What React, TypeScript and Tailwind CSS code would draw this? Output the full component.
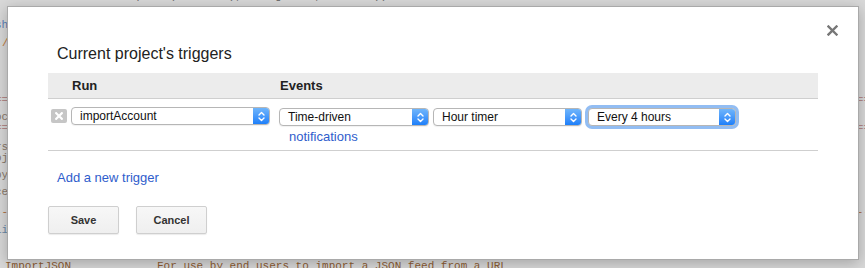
import React from 'react';

const Stepper = () => (
  <div className="flex w-[16px] shrink-0 items-center justify-center rounded-r-[3px] bg-linear-to-b from-[#6fb5fb] to-[#1c7ff9]">
    <svg width="7" height="11" viewBox="0 0 7 11" fill="none" stroke="white" strokeWidth="1.4" strokeLinecap="round" strokeLinejoin="round">
      <path d="M1 4 L3.5 1.5 L6 4" />
      <path d="M1 7 L3.5 9.5 L6 7" />
    </svg>
  </div>
);

const Select = ({ value, className }: { value: string; className: string }) => (
  <div className={`flex h-[18px] items-stretch rounded-[4px] border border-[#b6b6b6] bg-white shadow-[0_1px_1px_rgba(0,0,0,0.06)] ${className}`}>
    <div className="flex flex-1 items-center pl-[8px] text-[12px] leading-none text-[#111]">{value}</div>
    <Stepper />
  </div>
);

const Button = ({ label }: { label: string }) => (
  <button className="h-[28px] w-[71px] rounded-[2px] border border-[#cfcfcf] bg-linear-to-b from-[#f7f7f7] to-[#efefef] text-[11px] font-bold text-[#333] shadow-[0_1px_1px_rgba(0,0,0,0.08)]">
    {label}
  </button>
);

// the dimmed script editor behind the dialog; only its edges show
const Rule = ({ char, className }: { char: string; className: string }) => (
  <div className={`flex justify-between ${className}`}>
    <span className="ml-[-5px]">{char}</span>
    <span className="mr-[-5px]">{char}</span>
  </div>
);

const Backdrop = () => (
  <div className="flex flex-col font-['Liberation_Mono','DejaVu_Sans_Mono',monospace] text-[11px] leading-[12px] whitespace-pre">
    <div className="mt-[-10px] ml-[110px] text-[#666]">{'    p    (        ),     g     ,        ))'}</div>
    <div className="mt-[17px] ml-[-5px] text-[#5a7fb8]">sh</div>
    <div className="mt-[6px] ml-[2px] text-[#c07a3a]">/</div>
    <Rule char="==" className="mt-[45px] text-[#b48a8a]" />
    <div className="mt-[5px] ml-[-5px] text-[#8a7a6a]">oc</div>
    <Rule char="==" className="mt-[-1px] text-[#b48a8a]" />
    <div className="mt-[7px] ml-[-5px] text-[#8a7a6a]">rs</div>
    <div className="mt-[-1px] ml-[-5px] text-[#8a7a6a]">oj</div>
    <div className="mt-[5px] ml-[-5px] text-[#8a7a6a]">py</div>
    <div className="mt-[5px] ml-[-5px] text-[#8a7a6a]">ce</div>
    <Rule char="--" className="mt-[8px] text-[#b07040]" />
    <div className="mt-[6px] ml-[-5px] text-[#6a8aa8]">li</div>
    <div className="mt-[24px] flex text-[#8f5d33]">
      <span className="ml-[5px] w-[152px]">ImportJSON</span>
      <span>For use by end users to import a JSON feed from a URL</span>
    </div>
  </div>
);

const App = () => {
  return (
    <div className="relative h-[268px] w-[865px] overflow-hidden bg-[#d9d9d9] font-['Liberation_Sans',Arial,sans-serif]">
      <Backdrop />
      <div className="absolute left-[7px] top-[6px] h-[254px] w-[852px] border border-[#a9a9a9] bg-white pl-[40px] pt-[36px] shadow-[0_3px_14px_rgba(0,0,0,0.25)]">
        <button className="absolute right-[20px] top-[18px] text-[#777]">
          <svg width="11" height="11" viewBox="0 0 11 11" stroke="currentColor" strokeWidth="2.4" strokeLinecap="square">
            <path d="M1.5 1.5 L9.5 9.5 M9.5 1.5 L1.5 9.5" />
          </svg>
        </button>

        <div className="pl-[9px] text-[16px] leading-[22px] text-[#222]">Current project's triggers</div>

        <div className="mt-[8px] flex h-[26px] w-[770px] items-center border-b border-[#cfcfcf] bg-[#ececec] text-[13px] font-bold text-[#222]">
          <div className="w-[232px] pl-[24px]">Run</div>
          <div>Events</div>
        </div>

        <div className="flex h-[52px] w-[770px] border-b border-[#cfcfcf] pt-[8px]">
          <div className="ml-[3px] mt-[2px] flex h-[14px] w-[16px] items-center justify-center rounded-[2px] bg-[#c6c6c6]">
            <svg width="8" height="8" viewBox="0 0 8 8" stroke="white" strokeWidth="2.2" strokeLinecap="square">
              <path d="M1.2 1.2 L6.8 6.8 M6.8 1.2 L1.2 6.8" />
            </svg>
          </div>
          <Select value="importAccount" className="ml-[4px] w-[199px]" />
          <div className="ml-[9px] flex flex-col">
            <div className="mt-[1px] flex">
              <Select value="Time-driven" className="w-[150px]" />
              <Select value="Hour timer" className="ml-[4px] w-[149px]" />
              <Select value="Every 4 hours" className="ml-[6px] w-[148px] ring-[3px] ring-[#92bdf3]" />
            </div>
            <div className="mt-[3px] pl-[10px] text-[13px] leading-[16px] text-[#2f5dcc]">notifications</div>
          </div>
        </div>

        <div className="mt-[19px] pl-[9px] text-[13px] leading-[16px] text-[#2f5dcc]">Add a new trigger</div>

        <div className="mt-[20px] flex gap-[17px]">
          <Button label="Save" />
          <Button label="Cancel" />
        </div>
      </div>
    </div>
  );
};

export default App;
